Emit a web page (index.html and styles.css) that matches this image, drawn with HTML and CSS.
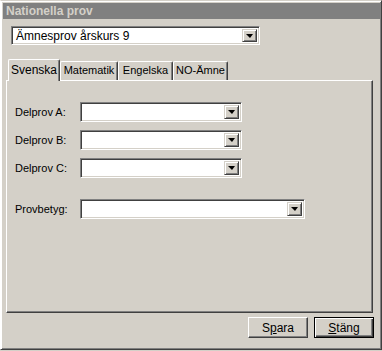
FILE: index.html
```html
<!DOCTYPE html>
<html lang="sv">
<head>
  <meta charset="UTF-8" />
  <title>Nationella prov</title>
  <link rel="stylesheet" href="styles.css">
</head>
<body>

  <div class="window">
    <!-- Title bar -->
    <div class="titlebar">Nationella prov</div>

    <div class="content">
      <!-- Test selector -->
      <div class="combo main-combo">
        <span class="combo-text">Ämnesprov årskurs 9</span>
        <span class="combo-btn"><span class="arrow"></span></span>
      </div>

      <!-- Tabs -->
      <div class="tabs">
        <div class="tab active">Svenska</div>
        <div class="tab">Matematik</div>
        <div class="tab">Engelska</div>
        <div class="tab">NO-Ämne</div>
      </div>

      <div class="panel">
        <div class="row">
          <label>Delprov A:</label>
          <div class="combo small"><span class="combo-text"></span><span class="combo-btn"><span class="arrow"></span></span></div>
        </div>
        <div class="row">
          <label>Delprov B:</label>
          <div class="combo small"><span class="combo-text"></span><span class="combo-btn"><span class="arrow"></span></span></div>
        </div>
        <div class="row">
          <label>Delprov C:</label>
          <div class="combo small"><span class="combo-text"></span><span class="combo-btn"><span class="arrow"></span></span></div>
        </div>
        <div class="row grade">
          <label>Provbetyg:</label>
          <div class="combo wide"><span class="combo-text"></span><span class="combo-btn"><span class="arrow"></span></span></div>
        </div>
      </div>

      <!-- Buttons -->
      <div class="buttons">
        <button class="btn">S<u>p</u>ara</button>
        <button class="btn default"><u>S</u>täng</button>
      </div>
    </div>
  </div>

</body>
</html>
```

FILE: styles.css
```css
body {
  margin: 0;
  background: #d4d0c8;
  font-family: 'Liberation Sans', Arial, sans-serif;
  font-size: 11px;
  color: #000;
}

.window {
  width: 382px;
  height: 350px;
  box-sizing: border-box;
  background: #d4d0c8;
  border-top: 1px solid #d4d0c8;
  border-left: 1px solid #ffffff;
  border-right: 1px solid #404040;
  border-bottom: 1px solid #404040;
  box-shadow: inset 1px 1px 0 #ffffff, inset -1px -1px 0 #808080;
  padding: 2px 1px 0 2px;
}

.titlebar {
  height: 16px;
  background: #808080;
  color: #d4d0c8;
  font-weight: bold;
  font-size: 12px;
  line-height: 16px;
  padding-left: 3px;
}

.content {
  padding: 7px 0 0 3px;
}

/* Combo boxes */
.combo {
  display: flex;
  box-sizing: border-box;
  height: 19px;
  background: #fff;
  border-top: 1px solid #808080;
  border-left: 1px solid #808080;
  border-right: 1px solid #ffffff;
  border-bottom: 1px solid #ffffff;
  box-shadow: inset 1px 1px 0 #404040, inset -1px -1px 0 #d4d0c8;
  padding: 2px;
}

.main-combo {
  width: 249px;
  margin-left: 5px;
  font-size: 12px;
}

.combo-text {
  flex: 1;
  line-height: 15px;
  padding-left: 2px;
}

.combo-btn {
  width: 15px;
  box-sizing: border-box;
  background: #d4d0c8;
  border-top: 1px solid #d4d0c8;
  border-left: 1px solid #d4d0c8;
  border-right: 1px solid #404040;
  border-bottom: 1px solid #404040;
  box-shadow: inset 1px 1px 0 #ffffff, inset -1px -1px 0 #808080;
  display: flex;
  align-items: center;
  justify-content: center;
}

.arrow {
  width: 0;
  height: 0;
  border-left: 4px solid transparent;
  border-right: 3px solid transparent;
  border-top: 4px solid #000;
}

.small {
  width: 162px;
  height: 20px;
}

.wide {
  width: 225px;
  height: 20px;
}

/* Tabs */
.tabs {
  display: flex;
  align-items: flex-end;
  margin-top: 14px;
  margin-left: 2px;
  height: 21px;
  position: relative;
  z-index: 1;
}

.tab {
  box-sizing: border-box;
  height: 19px;
  line-height: 17px;
  text-align: center;
  border-top: 1px solid #ffffff;
  border-left: 1px solid #ffffff;
  border-right: 1px solid #404040;
  box-shadow: inset -1px 0 0 #808080;
  border-radius: 2px 2px 0 0;
  background: #d4d0c8;
}

.tab:nth-child(1) { width: 52px; }
.tab:nth-child(2) { width: 58px; }
.tab:nth-child(3) { width: 55px; }
.tab:nth-child(4) { width: 55px; }

.tab.active {
  height: 22px;
  line-height: 20px;
  font-size: 12px;
  margin-bottom: -1px;
}

.panel {
  box-sizing: border-box;
  width: 367px;
  height: 233px;
  border-top: 1px solid #ffffff;
  border-left: 1px solid #ffffff;
  border-right: 1px solid #404040;
  border-bottom: 1px solid #404040;
  box-shadow: inset -1px -1px 0 #808080;
  padding: 21px 0 0 8px;
  display: flex;
  flex-direction: column;
  gap: 8px;
}

.row {
  display: flex;
  align-items: center;
}

.row label {
  width: 65px;
}

.row.grade {
  margin-top: 13px;
}

/* Buttons */
.buttons {
  display: flex;
  justify-content: flex-end;
  gap: 6px;
  margin-top: 4px;
  width: 368px;
}

.btn {
  width: 60px;
  height: 21px;
  box-sizing: border-box;
  font-family: 'Liberation Sans', Arial, sans-serif;
  font-size: 12px;
  background: #d4d0c8;
  color: #000;
  border-top: 1px solid #ffffff;
  border-left: 1px solid #ffffff;
  border-right: 1px solid #404040;
  border-bottom: 1px solid #404040;
  box-shadow: inset -1px -1px 0 #808080;
  padding: 0;
}

.btn.default {
  border: 1px solid #000;
  box-shadow: inset 1px 1px 0 #ffffff, inset -1px -1px 0 #404040, inset -2px -2px 0 #808080;
}
```
